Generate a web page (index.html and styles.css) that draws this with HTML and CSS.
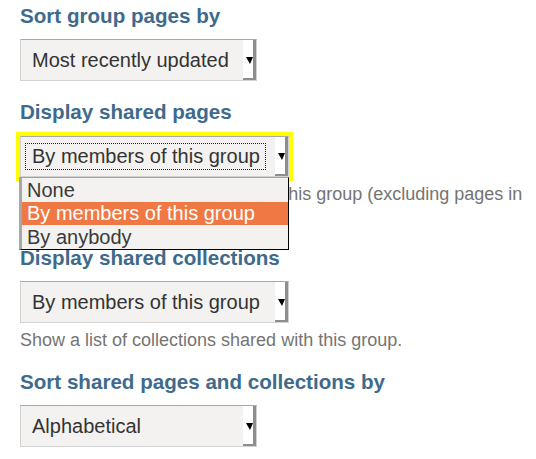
FILE: index.html
```html
<!DOCTYPE html>
<html lang="en">
<head>
<meta charset="utf-8">
<title>Group settings</title>
<link rel="stylesheet" href="styles.css">
</head>
<body>
<div class="page">
  <div class="field">
    <h2 class="label">Sort group pages by</h2>
    <div class="select short">
      <span class="value">Most recently updated</span>
      <span class="btn"><span class="tri"></span></span>
    </div>
  </div>

  <div class="field">
    <h2 class="label">Display shared pages</h2>
    <div class="select-wrap">
      <div class="select long focused">
        <span class="value ring-holder"><span class="ring">By members of this group</span></span>
        <span class="btn"><span class="tri"></span></span>
      </div>
      <ul class="dropdown">
        <li>None</li>
        <li class="active">By members of this group</li>
        <li>By anybody</li>
      </ul>
    </div>
    <p class="desc">Show a list of pages shared with this group (excluding pages in collections).</p>
  </div>

  <div class="field">
    <h2 class="label">Display shared collections</h2>
    <div class="select long">
      <span class="value">By members of this group</span>
      <span class="btn"><span class="tri"></span></span>
    </div>
    <p class="desc">Show a list of collections shared with this group.</p>
  </div>

  <div class="field">
    <h2 class="label">Sort shared pages and collections by</h2>
    <div class="select short">
      <span class="value">Alphabetical</span>
      <span class="btn"><span class="tri"></span></span>
    </div>
  </div>
</div>
</body>
</html>
```

FILE: styles.css
```css
html, body {
  margin: 0;
  padding: 0;
  background: #ffffff;
}

body {
  font-family: "Liberation Sans", Arial, sans-serif;
}

.page {
  padding: 4px 8px 0 20px;
}

.field {
  margin-bottom: 19px;
}

.label {
  margin: 0;
  font-size: 20.6px;
  line-height: 24px;
  font-weight: bold;
  color: #3e6a8c;
}

.select-wrap {
  position: relative;
  width: 269px;
  margin-top: 12px;
}

.select {
  display: flex;
  align-items: stretch;
  box-sizing: border-box;
  height: 42px;
  margin-top: 11px;
  border: 1px solid #d2d2d2;
  border-top-color: #a9a9a9;
  background: #f3f2f0;
}

.select-wrap .select {
  height: 41px;
  margin-top: 0;
}

.short {
  width: 237px;
}

.long {
  width: 269px;
}

.focused {
  outline: 4px solid #ffff00;
}

.value {
  flex: 1;
  display: flex;
  align-items: center;
  padding-left: 11px;
  font-size: 20px;
  color: #333333;
  white-space: nowrap;
}

.ring-holder {
  padding-left: 4px;
}

.ring {
  display: flex;
  align-items: center;
  box-sizing: border-box;
  height: 27px;
  padding: 0 5px 0 6px;
  border: 1px dotted #222222;
}

.btn {
  width: 13px;
  box-sizing: border-box;
  background: #ffffff;
  border-right: 3px solid #8e8e8e;
  border-bottom: 2px solid #8e8e8e;
  display: flex;
  align-items: center;
  justify-content: flex-end;
}

.tri {
  width: 0;
  height: 0;
  margin-top: 2px;
  border-left: 4px solid transparent;
  border-right: 3px solid transparent;
  border-top: 7px solid #000000;
}

.dropdown {
  position: absolute;
  left: -1px;
  top: 100%;
  width: 270px;
  box-sizing: border-box;
  margin: 0;
  padding: 0;
  list-style: none;
  background: #f3f2f0;
  border-top: 1px solid #a0a0a0;
  border-left: 3px solid #a8a8a8;
  border-right: 1px solid #000000;
  border-bottom: 1px solid #000000;
  z-index: 2;
}

.dropdown li {
  height: 24px;
  line-height: 24px;
  padding-left: 5px;
  font-size: 20px;
  color: #3a3a3a;
  white-space: nowrap;
}

.dropdown li.active {
  height: 23px;
  line-height: 23px;
  background: #f07845;
  color: #ffffff;
}

.desc {
  margin: 6px 0 0 0;
  font-size: 18px;
  line-height: 22px;
  color: #747474;
}
```
